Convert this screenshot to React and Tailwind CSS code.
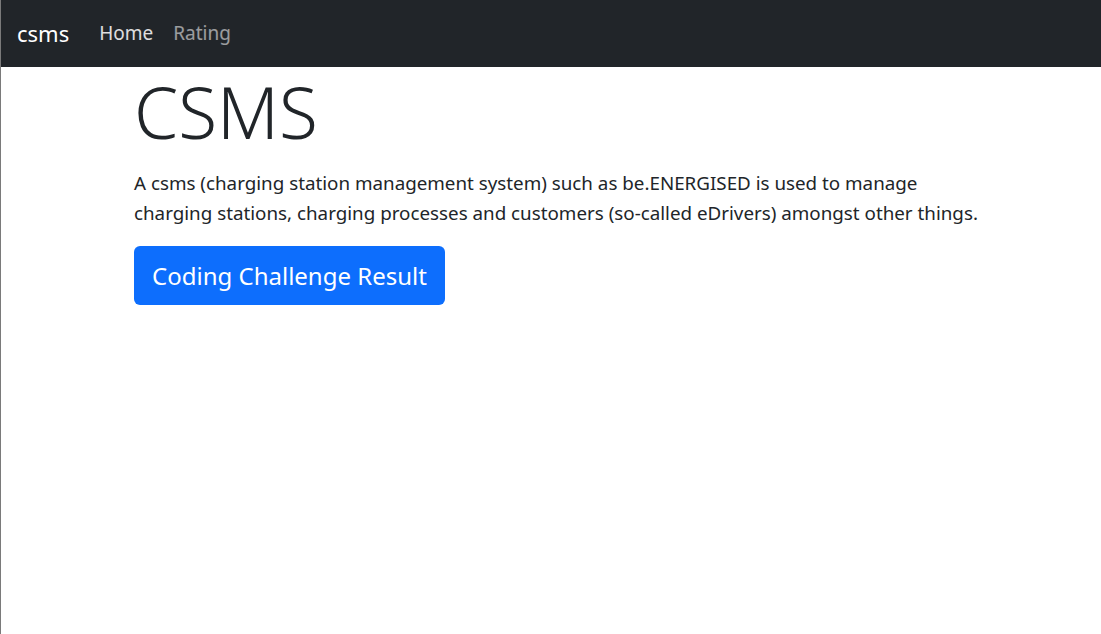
export default function App() {
  return (
    <div className="min-h-[634px] bg-white border-l border-[#7a7a7a] font-['Noto_Sans',sans-serif] text-[#212529]">
      {/* Navbar */}
      <nav className="h-[67px] bg-[#212529] flex items-center px-4">
        <span className="text-[22px] text-white mr-[30px]">csms</span>
        <div className="flex items-center gap-5 text-[19px]">
          <span className="text-white/85">Home</span>
          <span className="text-white/55">Rating</span>
        </div>
      </nav>

      {/* Hero */}
      <main className="pl-[133px] pt-[2px]">
        <h1 className="text-[71px] font-light leading-[1.2]">CSMS</h1>
        <p className="mt-[14px] text-[18.8px] leading-[30px] max-w-[850px]">
          A csms (charging station management system) such as be.ENERGISED is used to manage
          charging stations, charging processes and customers (so-called eDrivers) amongst other things.
        </p>
        <button className="mt-[18px] h-[59px] px-[18px] rounded-[6px] bg-[#0d6efd] text-white text-[24px]">
          Coding Challenge Result
        </button>
      </main>
    </div>
  );
}
